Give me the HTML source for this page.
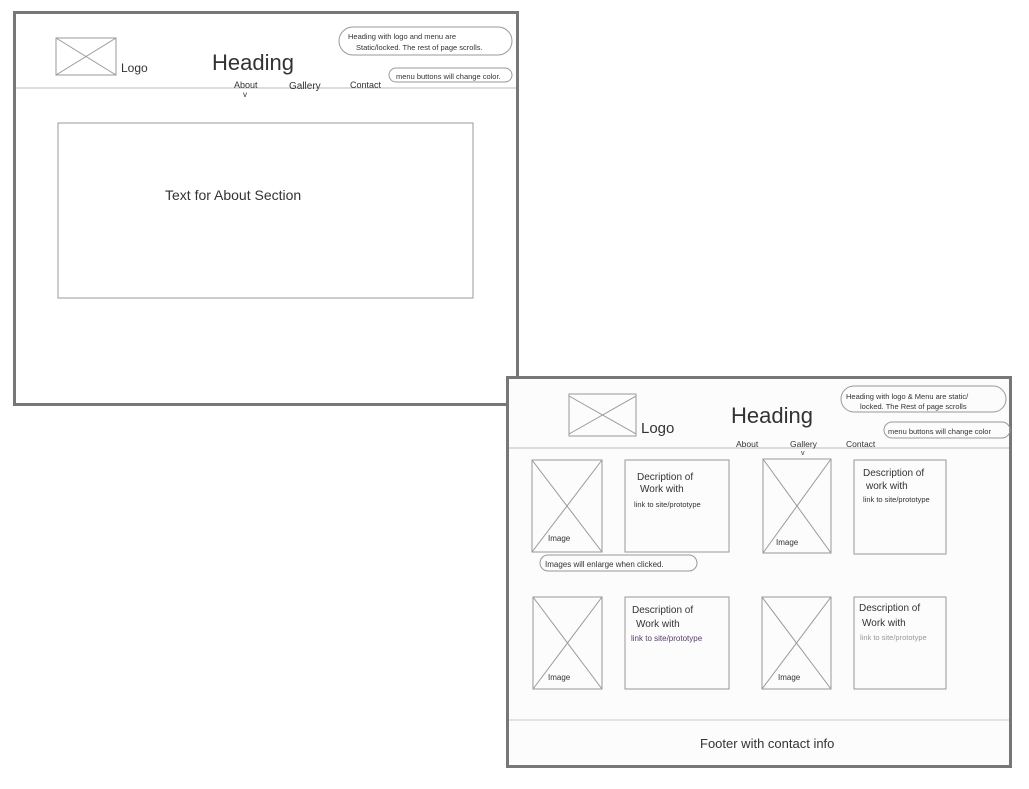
<!DOCTYPE html>
<html><head><meta charset="utf-8"><style>
html,body{margin:0;padding:0;background:#fff;width:1029px;height:789px;overflow:hidden}
svg{display:block}
text{font-family:"Liberation Sans",sans-serif;fill:#333}
</style></head><body>
<svg width="1029" height="789" viewBox="0 0 1029 789">
<!-- sheet 1 -->
<rect x="14.5" y="12.5" width="503" height="392" fill="#fff" stroke="#777" stroke-width="3"/>
<g stroke="#999" stroke-width="1" fill="none">
<rect x="56" y="38" width="60" height="37"/>
<line x1="56" y1="38" x2="116" y2="75"/><line x1="56" y1="75" x2="116" y2="38"/>
<line x1="16" y1="88" x2="516" y2="88" stroke="#bbb"/>
<rect x="58" y="123" width="415" height="175"/>
<rect x="339" y="27" width="173" height="28" rx="14"/>
<rect x="389" y="68" width="123" height="14" rx="7"/>
</g>
<text x="121" y="72" font-size="12">Logo</text>
<text x="212" y="70" font-size="22" font-weight="300">Heading</text>
<text x="234" y="88" font-size="9">About</text>
<text x="243" y="97" font-size="8">v</text>
<text x="289" y="89" font-size="10">Gallery</text>
<text x="350" y="88" font-size="9">Contact</text>
<text x="348" y="39" font-size="7.5">Heading with logo and menu are</text>
<text x="356" y="50" font-size="7.5">Static/locked. The rest of page scrolls.</text>
<text x="396" y="79" font-size="7.5">menu buttons will change color.</text>
<text x="165" y="200" font-size="14">Text  for  About Section</text>
<!-- sheet 2 -->
<rect x="507.5" y="377.5" width="503" height="389" fill="#fbfcfb" stroke="#777" stroke-width="3"/>
<g stroke="#999" stroke-width="1" fill="none">
<rect x="569" y="394" width="67" height="42"/>
<line x1="569" y1="396" x2="636" y2="434"/><line x1="569" y1="434" x2="636" y2="396"/>
<line x1="509" y1="448" x2="1009" y2="448" stroke="#bbb"/>
<rect x="841" y="386" width="165" height="26" rx="13"/>
<rect x="884" y="422" width="126" height="16" rx="8"/>
<rect x="532" y="460" width="70" height="92"/><line x1="532" y1="460" x2="602" y2="552"/><line x1="532" y1="552" x2="602" y2="460"/>
<rect x="625" y="460" width="104" height="92"/>
<rect x="763" y="459" width="68" height="94"/><line x1="763" y1="459" x2="831" y2="553"/><line x1="763" y1="553" x2="831" y2="459"/>
<rect x="854" y="460" width="92" height="94"/>
<rect x="540" y="555" width="157" height="16" rx="8"/>
<rect x="533" y="597" width="69" height="92"/><line x1="533" y1="597" x2="602" y2="689"/><line x1="533" y1="689" x2="602" y2="597"/>
<rect x="625" y="597" width="104" height="92"/>
<rect x="762" y="597" width="69" height="92"/><line x1="762" y1="597" x2="831" y2="689"/><line x1="762" y1="689" x2="831" y2="597"/>
<rect x="854" y="597" width="92" height="92"/>
<line x1="509" y1="720" x2="1009" y2="720" stroke="#ccc"/>
</g>
<text x="641" y="433" font-size="15">Logo</text>
<text x="731" y="423" font-size="22" font-weight="300">Heading</text>
<text x="736" y="447" font-size="8.5">About</text>
<text x="790" y="447" font-size="8.5">Gallery</text>
<text x="801" y="455" font-size="7">v</text>
<text x="846" y="447" font-size="8.5">Contact</text>
<text x="846" y="399" font-size="7.5">Heading with logo &amp; Menu are static/</text>
<text x="860" y="409" font-size="7.5">locked. The Rest of page scrolls</text>
<text x="888" y="434" font-size="7.5">menu buttons will change color</text>
<text x="637" y="480" font-size="10">Decription of</text>
<text x="640" y="492" font-size="10">Work with</text>
<text x="634" y="507" font-size="7.5">link to site/prototype</text>
<text x="548" y="541" font-size="8">Image</text>
<text x="776" y="545" font-size="8">Image</text>
<text x="863" y="476" font-size="10">Description of</text>
<text x="866" y="489" font-size="10">work with</text>
<text x="863" y="502" font-size="7.5">link to site/prototype</text>
<text x="545" y="567" font-size="8">Images will enlarge when clicked.</text>
<text x="632" y="613" font-size="10">Description of</text>
<text x="636" y="627" font-size="10">Work with</text>
<text x="631" y="641" font-size="8" style="fill:#5a3a6a">link to site/prototype</text>
<text x="548" y="680" font-size="8">Image</text>
<text x="778" y="680" font-size="8">Image</text>
<text x="859" y="611" font-size="10">Description of</text>
<text x="862" y="626" font-size="10">Work with</text>
<text x="860" y="640" font-size="7.5" style="fill:#999">link to site/prototype</text>
<text x="700" y="748" font-size="13">Footer with contact info</text>
</svg>
</body></html>
